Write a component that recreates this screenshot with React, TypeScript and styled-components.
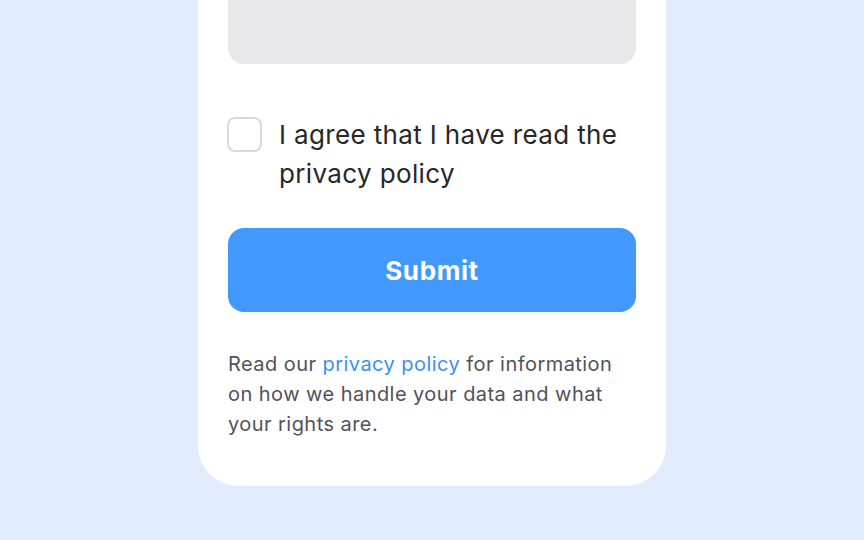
import { createGlobalStyle, styled } from 'styled-components';

const GlobalStyle = createGlobalStyle`
  html, body {
    margin: 0;
    padding: 0;
    height: 100%;
    overflow: hidden;
  }
  body {
    background: #e0ecfd;
    font-family: Inter, 'Noto Sans', sans-serif;
  }
`;

export default function App() {
  return (
    <>
      <GlobalStyle />
      <Page>
        <Card>
          <TextArea />
          <CheckRow>
            <Checkbox />
            <Label>I agree that I have read the privacy policy</Label>
          </CheckRow>
          <SubmitButton>Submit</SubmitButton>
          <Footnote>
            Read our <Link href="#">privacy policy</Link> for information on how
            we handle your data and what your rights are.
          </Footnote>
        </Card>
      </Page>
    </>
  );
}

const Page = styled.div`
  height: 540px;
  display: flex;
  flex-direction: column;
  justify-content: flex-end;
  align-items: center;
  padding-bottom: 54px;
  box-sizing: border-box;
`;

const Card = styled.div`
  width: 468px;
  box-sizing: border-box;
  background: #ffffff;
  border-radius: 0 0 40px 40px;
  padding: 0 30px 47px;
  display: flex;
  flex-direction: column;
  flex-shrink: 0;
`;

const TextArea = styled.div`
  height: 200px;
  background: #e8e8ea;
  border-radius: 0 0 16px 16px;
`;

const CheckRow = styled.label`
  display: flex;
  gap: 17px;
  margin-top: 51px;
  cursor: pointer;
`;

const Checkbox = styled.span`
  width: 35px;
  height: 35px;
  flex-shrink: 0;
  box-sizing: border-box;
  margin-top: 2px;
  margin-left: -1px;
  border: 2.5px solid #d9d9dc;
  border-radius: 8px;
  background: #ffffff;
`;

const Label = styled.span`
  font-size: 26px;
  line-height: 39px;
  letter-spacing: 0.36px;
  color: #27272a;
`;

const SubmitButton = styled.button`
  margin-top: 35px;
  height: 84px;
  border: none;
  border-radius: 16px;
  background: #4299fd;
  color: #ffffff;
  font-family: Inter, sans-serif;
  font-size: 26px;
  font-weight: 700;
  letter-spacing: 0.6px;
  cursor: pointer;
`;

const Footnote = styled.p`
  margin: 37px 0 0;
  max-width: 392px;
  font-size: 20px;
  line-height: 30px;
  letter-spacing: 0.45px;
  color: #52525b;
`;

const Link = styled.a`
  color: #3b8ff6;
  text-decoration: none;
`;
